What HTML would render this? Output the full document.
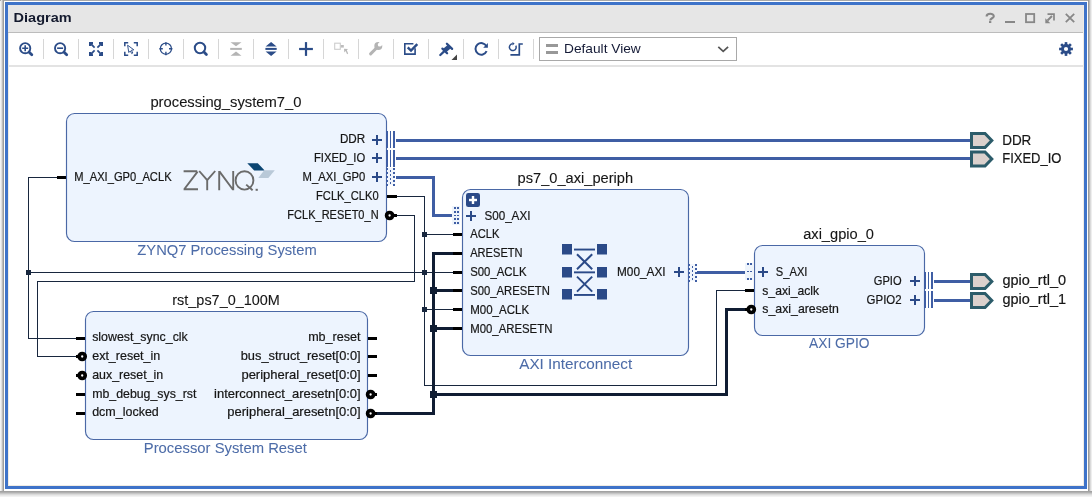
<!DOCTYPE html>
<html><head><meta charset="utf-8"><style>
html,body{margin:0;padding:0;width:1092px;height:497px;overflow:hidden;background:#f3f3f3}
#wrap{position:absolute;left:0;top:0;width:1092px;height:497px;will-change:transform}
svg{display:block;font-family:"Liberation Sans",sans-serif}
text{font-family:"Liberation Sans",sans-serif}
</style></head><body><div id="wrap">
<svg width="1092" height="497" viewBox="0 0 1092 497" shape-rendering="auto">
<rect x="0" y="0" width="1092" height="497" fill="#f3f3f3"/>
<rect x="0" y="0" width="1092" height="1" fill="#a9a9a9"/>
<rect x="1" y="0" width="1" height="497" fill="#e0e0e0"/>
<rect x="2" y="0" width="1" height="497" fill="#bdbdbd"/>
<rect x="3" y="0" width="1" height="497" fill="#9d9d9d"/>
<rect x="1088" y="0" width="1" height="497" fill="#9a9a9a"/>
<rect x="1089" y="0" width="1" height="497" fill="#b9b9b9"/>
<rect x="1090" y="0" width="1" height="497" fill="#dadada"/>
<rect x="1091" y="0" width="1" height="497" fill="#eeeeee"/>
<rect x="0" y="491" width="1092" height="1" fill="#a2a2a2"/>
<rect x="0" y="492" width="1092" height="1" fill="#b0b0b0"/>
<rect x="0" y="493" width="1092" height="1" fill="#c6c6c6"/>
<rect x="0" y="494" width="1092" height="1" fill="#dadada"/>
<rect x="0" y="495" width="1092" height="1" fill="#e8e8e8"/>
<rect x="0" y="496" width="1092" height="1" fill="#f2f2f2"/>
<rect x="4" y="1" width="1084" height="490" fill="#ffffff"/>
<rect x="5" y="2" width="1082" height="487" fill="#3e73c9"/>
<rect x="8" y="5" width="1076" height="481" fill="#efebe4"/>
<rect x="8" y="5" width="1075" height="27" fill="#e6e6e6"/>
<rect x="8" y="32" width="1075" height="1" fill="#bcbcbc"/>
<rect x="9" y="33" width="1074" height="452" fill="#ffffff"/>
<rect x="9" y="65" width="1074" height="2" fill="#e3e3e3"/>
<text x="13.6" y="21.7" font-size="12.8" font-weight="bold" fill="#141a2e" textLength="58" lengthAdjust="spacingAndGlyphs">Diagram</text>
<path d="M986.6,16.4 C986.6,13.1 993.8,12.9 993.8,16.2 C993.8,18.2 990.2,18.3 990.2,20.4" fill="none" stroke="#878787" stroke-width="2.1"/>
<rect x="989.0" y="21.1" width="2.3" height="1.9" fill="#878787"/>
<rect x="1005" y="21" width="10" height="2" fill="#878787"/>
<rect x="1026" y="14" width="8.2" height="8.2" fill="none" stroke="#878787" stroke-width="1.8"/>
<polyline points="1047.5,14.2 1054,14.2 1054,20.5" fill="none" stroke="#878787" stroke-width="1.7"/>
<line x1="1052" y1="16" x2="1047.5" y2="20.5" stroke="#878787" stroke-width="1.9"/>
<polygon points="1045.3,18.2 1045.3,23.2 1050.3,23.2" fill="#878787"/>
<path d="M1065.8,13.8 L1074.2,22.2 M1074.2,13.8 L1065.8,22.2" stroke="#878787" stroke-width="1.8"/>
<rect x="43" y="39" width="1" height="20" fill="#d6d6d6"/>
<rect x="78" y="39" width="1" height="20" fill="#d6d6d6"/>
<rect x="113" y="39" width="1" height="20" fill="#d6d6d6"/>
<rect x="148" y="39" width="1" height="20" fill="#d6d6d6"/>
<rect x="183" y="39" width="1" height="20" fill="#d6d6d6"/>
<rect x="218" y="39" width="1" height="20" fill="#d6d6d6"/>
<rect x="253" y="39" width="1" height="20" fill="#d6d6d6"/>
<rect x="288" y="39" width="1" height="20" fill="#d6d6d6"/>
<rect x="323" y="39" width="1" height="20" fill="#d6d6d6"/>
<rect x="358" y="39" width="1" height="20" fill="#d6d6d6"/>
<rect x="393" y="39" width="1" height="20" fill="#d6d6d6"/>
<rect x="428" y="39" width="1" height="20" fill="#d6d6d6"/>
<rect x="463" y="39" width="1" height="20" fill="#d6d6d6"/>
<rect x="498" y="39" width="1" height="20" fill="#d6d6d6"/>
<rect x="533" y="39" width="1" height="20" fill="#d6d6d6"/>
<circle cx="25.2" cy="48.2" r="5.1" fill="none" stroke="#2b4c88" stroke-width="1.9"/>
<line x1="29.2" y1="52.2" x2="31.799999999999997" y2="54.8" stroke="#2b4c88" stroke-width="2.8" stroke-linecap="round"/>
<path d="M22.2,48.2 H28.2 M25.2,45.2 V51.2" stroke="#2b4c88" stroke-width="1.6"/>
<circle cx="60.1" cy="48.2" r="5.1" fill="none" stroke="#2b4c88" stroke-width="1.9"/>
<line x1="64.1" y1="52.2" x2="66.7" y2="54.8" stroke="#2b4c88" stroke-width="2.8" stroke-linecap="round"/>
<path d="M57.1,48.2 H63.1" stroke="#2b4c88" stroke-width="1.6"/>
<polygon points="89.00,42.00 93.00,42.00 93.00,43.80 90.80,46.00 89.00,46.00" fill="#2b4c88"/>
<line x1="91.40" y1="44.40" x2="94.60" y2="47.60" stroke="#2b4c88" stroke-width="1.7"/>
<polygon points="103.00,42.00 99.00,42.00 99.00,43.80 101.20,46.00 103.00,46.00" fill="#2b4c88"/>
<line x1="100.60" y1="44.40" x2="97.40" y2="47.60" stroke="#2b4c88" stroke-width="1.7"/>
<polygon points="89.00,56.00 93.00,56.00 93.00,54.20 90.80,52.00 89.00,52.00" fill="#2b4c88"/>
<line x1="91.40" y1="53.60" x2="94.60" y2="50.40" stroke="#2b4c88" stroke-width="1.7"/>
<polygon points="103.00,56.00 99.00,56.00 99.00,54.20 101.20,52.00 103.00,52.00" fill="#2b4c88"/>
<line x1="100.60" y1="53.60" x2="97.40" y2="50.40" stroke="#2b4c88" stroke-width="1.7"/>
<path d="M124.8,46.2 V42.8 H128.2 M133.8,42.8 H137.2 V46.2 M137.2,51.8 V55.2 H133.8 M128.2,55.2 H124.8 V51.8" fill="none" stroke="#2b4c88" stroke-width="1.5"/>
<path d="M127.6,45.2 L133.8,49.8 L131.4,50.3 L132.8,53 L131.7,53.6 L130.3,50.9 L128.8,52.5 Z" fill="#fff" stroke="#2b4c88" stroke-width="0.95"/>
<circle cx="165.9" cy="48.7" r="5.6" fill="none" stroke="#2b4c88" stroke-width="1.3"/>
<path d="M165.9,42.2 V45.6 M165.9,51.8 V55.2 M159.4,48.7 H162.8 M169,48.7 H172.4" stroke="#2b4c88" stroke-width="1.4"/>
<circle cx="200" cy="48" r="5.2" fill="none" stroke="#2b4c88" stroke-width="2"/>
<line x1="204" y1="52" x2="206.4" y2="54.4" stroke="#2b4c88" stroke-width="2.8" stroke-linecap="round"/>
<path d="M230.5,42.2 H241.5 L236,46.2 Z M230.5,55.8 H241.5 L236,51.6 Z" fill="#b4b4b4"/>
<rect x="230.2" y="47.9" width="11.6" height="2" fill="#b4b4b4"/>
<path d="M265.6,46.4 H276.6 L271.1,42 Z M265.6,51.4 H276.6 L271.1,56 Z" fill="#2b4c88"/>
<rect x="265.4" y="47.9" width="11.3" height="2" fill="#2b4c88"/>
<rect x="299.1" y="47.9" width="13.8" height="2.2" fill="#2b4c88"/>
<rect x="304.9" y="42.1" width="2.2" height="13.8" fill="#2b4c88"/>
<rect x="334.7" y="43.2" width="5.6" height="6.1" fill="none" stroke="#cdcdcd" stroke-width="1.1"/>
<rect x="340.8" y="45" width="3" height="2.6" fill="#bdbdbd"/>
<path d="M344,48.7 L348,49.1 L346.8,50.3 L348.2,53.5 L347.1,54.2 L345.6,51 L344.3,52.4 Z" fill="#b9b9b9"/>
<line x1="377" y1="47.5" x2="370.6" y2="53.9" stroke="#b4b4b4" stroke-width="3" stroke-linecap="round"/>
<circle cx="378.3" cy="45.9" r="4" fill="#b4b4b4"/>
<circle cx="379.7" cy="44.7" r="1.9" fill="#fff"/><polygon points="378.6,43 381.6,40.5 384.2,43.4 381.4,45.8" fill="#fff"/>
<path d="M415.1,48.2 V54.1 H404.8 V43.8 H413.4" fill="none" stroke="#2b4c88" stroke-width="1.6"/>
<path d="M407.7,47.4 L411,50.6 L417.3,44.2" fill="none" stroke="#2b4c88" stroke-width="2.4"/>
<path d="M446.9,43.7 L452.1,48.9 M442.4,48.6 L447.1,53.3 M444.4,51.2 L440.3,55" fill="none" stroke="#2b4c88" stroke-width="2.3" stroke-linecap="round"/><polygon points="447.6,45 450.9,48.3 446.2,52.3 442.9,49" fill="#2b4c88"/>
<path d="M457,54.5 V60 H451.5 Z" fill="#444"/>
<path d="M486.4,46.1 A5.8,5.8 0 1 0 486.6,51.2" fill="none" stroke="#2b4c88" stroke-width="2"/>
<path d="M487.9,43 V47.7 H483.2 Z" fill="#2b4c88"/>
<path d="M515.8,45.6 A3.4,3.4 0 1 1 512.6,43.8" fill="none" stroke="#2b4c88" stroke-width="1.5"/>
<path d="M512.4,42 L514.6,43.6 L512.6,45.4 Z" fill="#2b4c88"/>
<path d="M510.4,54.9 H519.3 V44 H522.8" fill="none" stroke="#2b4c88" stroke-width="1.7"/>
<g transform="translate(1066,49)"><rect x="-1.3" y="-6.9" width="2.6" height="3" fill="#2b4c88" transform="rotate(0)"/><rect x="-1.3" y="-6.9" width="2.6" height="3" fill="#2b4c88" transform="rotate(45)"/><rect x="-1.3" y="-6.9" width="2.6" height="3" fill="#2b4c88" transform="rotate(90)"/><rect x="-1.3" y="-6.9" width="2.6" height="3" fill="#2b4c88" transform="rotate(135)"/><rect x="-1.3" y="-6.9" width="2.6" height="3" fill="#2b4c88" transform="rotate(180)"/><rect x="-1.3" y="-6.9" width="2.6" height="3" fill="#2b4c88" transform="rotate(225)"/><rect x="-1.3" y="-6.9" width="2.6" height="3" fill="#2b4c88" transform="rotate(270)"/><rect x="-1.3" y="-6.9" width="2.6" height="3" fill="#2b4c88" transform="rotate(315)"/><circle cx="0" cy="0" r="4.9" fill="#2b4c88"/><circle cx="0" cy="0" r="2.1" fill="#fff"/></g>
<rect x="539.5" y="37.5" width="197" height="23" fill="#fff" stroke="#a9a9a9" stroke-width="1"/>
<rect x="546" y="44" width="12" height="3" fill="#989898"/>
<rect x="546" y="51" width="12" height="3" fill="#989898"/>
<text x="564.00" y="53.20" text-anchor="start" font-size="12.70" fill="#141a36" textLength="76.77" lengthAdjust="spacingAndGlyphs">Default View</text>
<path d="M718.3,46.8 L723.2,51.4 L728.1,46.8" fill="none" stroke="#555" stroke-width="1.7"/>
<rect x="66.5" y="113.5" width="320" height="128" rx="8" ry="8" fill="#edf4fe" stroke="#4a68a6" stroke-width="1.15"/>
<rect x="85.5" y="311.5" width="282" height="128" rx="8" ry="8" fill="#edf4fe" stroke="#4a68a6" stroke-width="1.15"/>
<rect x="462.5" y="189.5" width="226" height="166" rx="8" ry="8" fill="#edf4fe" stroke="#4a68a6" stroke-width="1.15"/>
<rect x="754.5" y="245.5" width="170" height="90" rx="8" ry="8" fill="#edf4fe" stroke="#4a68a6" stroke-width="1.15"/>
<rect x="28" y="177" width="29" height="1" fill="#18273e"/>
<rect x="28" y="177" width="1" height="162" fill="#18273e"/>
<rect x="28" y="338" width="48" height="1" fill="#18273e"/>
<rect x="28" y="272" width="425" height="1" fill="#18273e"/>
<rect x="397" y="196" width="28" height="1" fill="#18273e"/>
<rect x="424" y="196" width="1" height="190" fill="#18273e"/>
<rect x="424" y="385" width="293" height="1" fill="#18273e"/>
<rect x="716" y="290" width="1" height="96" fill="#18273e"/>
<rect x="716" y="290" width="29" height="1" fill="#18273e"/>
<rect x="424" y="234" width="29" height="1" fill="#18273e"/>
<rect x="424" y="309" width="29" height="1" fill="#18273e"/>
<rect x="397" y="215" width="18" height="1" fill="#18273e"/>
<rect x="414" y="215" width="1" height="67" fill="#18273e"/>
<rect x="37" y="281" width="378" height="1" fill="#18273e"/>
<rect x="37" y="281" width="1" height="76" fill="#18273e"/>
<rect x="37" y="356" width="39" height="1" fill="#18273e"/>
<rect x="26" y="270" width="5" height="5" fill="#18273e"/>
<rect x="422" y="232" width="5" height="5" fill="#18273e"/>
<rect x="422" y="270" width="5" height="5" fill="#18273e"/>
<rect x="422" y="307" width="5" height="5" fill="#18273e"/>
<rect x="377" y="412" width="58" height="3" fill="#101d33"/>
<rect x="432" y="252" width="3" height="163" fill="#101d33"/>
<rect x="433" y="252" width="20" height="3" fill="#101d33"/>
<rect x="433" y="289" width="20" height="3" fill="#101d33"/>
<rect x="433" y="327" width="20" height="3" fill="#101d33"/>
<rect x="433" y="393" width="295" height="3" fill="#101d33"/>
<rect x="725" y="308" width="3" height="88" fill="#101d33"/>
<rect x="726" y="308" width="21" height="3" fill="#101d33"/>
<rect x="430" y="287" width="7" height="7" fill="#101d33"/>
<rect x="430" y="325" width="7" height="7" fill="#101d33"/>
<rect x="430" y="391" width="7" height="7" fill="#101d33"/>
<rect x="396" y="139" width="576" height="3" fill="#3f5ea4"/>
<rect x="396" y="157" width="576" height="3" fill="#3f5ea4"/>
<rect x="396" y="176" width="39" height="3" fill="#3f5ea4"/>
<rect x="432" y="176" width="3" height="41" fill="#3f5ea4"/>
<rect x="433" y="214" width="20" height="3" fill="#3f5ea4"/>
<rect x="697" y="271" width="48" height="3" fill="#3f5ea4"/>
<rect x="934" y="280" width="38" height="3" fill="#3f5ea4"/>
<rect x="934" y="299" width="38" height="3" fill="#3f5ea4"/>
<text x="150.40" y="106.90" text-anchor="start" font-size="14.47" fill="#161616" textLength="151.11" lengthAdjust="spacingAndGlyphs" stroke="#161616" stroke-width="0.1">processing_system7_0</text>
<text x="137.30" y="255.10" text-anchor="start" font-size="13.95" fill="#4d6ca8" textLength="179.41" lengthAdjust="spacingAndGlyphs" stroke="#4d6ca8" stroke-width="0.05">ZYNQ7 Processing System</text>
<rect x="57" y="176" width="9" height="3" fill="#000"/>
<text x="74.20" y="181.00" text-anchor="start" font-size="12.10" fill="#161616" textLength="97.39" lengthAdjust="spacingAndGlyphs" stroke="#161616" stroke-width="0.2">M_AXI_GP0_ACLK</text>
<text x="365.20" y="143.00" text-anchor="end" font-size="12.10" fill="#161616" textLength="25.25" lengthAdjust="spacingAndGlyphs" stroke="#161616" stroke-width="0.2">DDR</text>
<text x="365.20" y="162.00" text-anchor="end" font-size="12.10" fill="#161616" textLength="51.29" lengthAdjust="spacingAndGlyphs" stroke="#161616" stroke-width="0.2">FIXED_IO</text>
<text x="365.20" y="181.00" text-anchor="end" font-size="12.10" fill="#161616" textLength="62.61" lengthAdjust="spacingAndGlyphs" stroke="#161616" stroke-width="0.2">M_AXI_GP0</text>
<text x="378.60" y="200.00" text-anchor="end" font-size="12.10" fill="#161616" textLength="62.53" lengthAdjust="spacingAndGlyphs" stroke="#161616" stroke-width="0.2">FCLK_CLK0</text>
<text x="378.60" y="219.00" text-anchor="end" font-size="12.10" fill="#161616" textLength="91.25" lengthAdjust="spacingAndGlyphs" stroke="#161616" stroke-width="0.2">FCLK_RESET0_N</text>
<rect x="372" y="139" width="10" height="2" fill="#2b4a88"/>
<rect x="376" y="135" width="2" height="10" fill="#2b4a88"/>
<rect x="372" y="157" width="10" height="2" fill="#2b4a88"/>
<rect x="376" y="153" width="2" height="10" fill="#2b4a88"/>
<rect x="372" y="176" width="10" height="2" fill="#2b4a88"/>
<rect x="376" y="172" width="2" height="10" fill="#2b4a88"/>
<rect x="386" y="131" width="2" height="17" fill="#3f5ea4"/>
<rect x="390" y="131" width="1" height="17" fill="#3f5ea4"/>
<rect x="393" y="131" width="2" height="17" fill="#3f5ea4"/>
<rect x="386" y="150" width="2" height="17" fill="#3f5ea4"/>
<rect x="390" y="150" width="1" height="17" fill="#3f5ea4"/>
<rect x="393" y="150" width="2" height="17" fill="#3f5ea4"/>
<rect x="387" y="168" width="8" height="17" fill="#f2f6fc"/>
<rect x="386" y="168" width="1" height="17" fill="#4a68a6"/>
<rect x="386" y="168" width="2" height="2" fill="#3f5ea4"/>
<rect x="393" y="168" width="2" height="2" fill="#3f5ea4"/>
<rect x="386" y="172" width="2" height="2" fill="#3f5ea4"/>
<rect x="393" y="172" width="2" height="2" fill="#3f5ea4"/>
<rect x="386" y="176" width="2" height="2" fill="#3f5ea4"/>
<rect x="393" y="176" width="2" height="2" fill="#3f5ea4"/>
<rect x="386" y="180" width="2" height="2" fill="#3f5ea4"/>
<rect x="393" y="180" width="2" height="2" fill="#3f5ea4"/>
<rect x="386" y="184" width="2" height="2" fill="#3f5ea4"/>
<rect x="393" y="184" width="2" height="2" fill="#3f5ea4"/>
<rect x="390" y="170" width="1" height="2" fill="#3f5ea4"/>
<rect x="390" y="174" width="1" height="2" fill="#3f5ea4"/>
<rect x="390" y="178" width="1" height="2" fill="#3f5ea4"/>
<rect x="390" y="182" width="1" height="2" fill="#3f5ea4"/>
<rect x="387" y="195" width="10" height="3" fill="#000"/>
<rect x="392" y="214" width="5" height="3" fill="#000"/>
<circle cx="389.6" cy="215.5" r="3.0" fill="#fff" stroke="#000" stroke-width="3.7"/>
<path d="M183.6,171.3 H197.2 M197.6,171.6 L184.4,189 M183.6,189.3 H198" fill="none" stroke="#6b6b6b" stroke-width="1.9"/>
<path d="M199.2,171 L207.2,180.2 M215.2,171 L207.2,180.2 M207.2,179.6 V190.3" fill="none" stroke="#6b6b6b" stroke-width="1.9"/>
<path d="M219.2,190.3 V170.9 M233.2,190.3 V170.9 M219.4,171.4 L233,189.8" fill="none" stroke="#6b6b6b" stroke-width="1.9"/>
<ellipse cx="244.5" cy="180.4" rx="8.9" ry="9.2" fill="none" stroke="#6b6b6b" stroke-width="1.9"/>
<path d="M246.2,184.6 L252.6,190.2" stroke="#6b6b6b" stroke-width="1.9"/>
<rect x="255.6" y="188.8" width="2.2" height="2" fill="#6b6b6b"/>
<polygon points="247.3,163.2 257.8,163.2 264.7,170.5 254.2,170.5" fill="#0b4572"/>
<polygon points="264.2,170.3 274.8,170.3 268.4,177.9 258.3,177.9" fill="#b9c9d8"/>
<text x="172.30" y="305.20" text-anchor="start" font-size="14.47" fill="#161616" textLength="107.52" lengthAdjust="spacingAndGlyphs" stroke="#161616" stroke-width="0.1">rst_ps7_0_100M</text>
<text x="306.90" y="452.90" text-anchor="end" font-size="13.95" fill="#4d6ca8" textLength="163.10" lengthAdjust="spacingAndGlyphs" stroke="#4d6ca8" stroke-width="0.05">Processor System Reset</text>
<text x="92.20" y="341.00" text-anchor="start" font-size="12.10" fill="#161616" textLength="95.60" lengthAdjust="spacingAndGlyphs" stroke="#161616" stroke-width="0.2">slowest_sync_clk</text>
<rect x="76" y="337" width="9" height="3" fill="#000"/>
<text x="92.20" y="360.00" text-anchor="start" font-size="12.10" fill="#161616" textLength="68.09" lengthAdjust="spacingAndGlyphs" stroke="#161616" stroke-width="0.2">ext_reset_in</text>
<rect x="76" y="355" width="5" height="3" fill="#000"/>
<circle cx="82.2" cy="356.5" r="3.0" fill="#fff" stroke="#000" stroke-width="3.7"/>
<text x="92.20" y="378.80" text-anchor="start" font-size="12.10" fill="#161616" textLength="71.00" lengthAdjust="spacingAndGlyphs" stroke="#161616" stroke-width="0.2">aux_reset_in</text>
<rect x="76" y="374" width="5" height="3" fill="#000"/>
<circle cx="82.2" cy="375.5" r="3.0" fill="#fff" stroke="#000" stroke-width="3.7"/>
<text x="92.20" y="397.60" text-anchor="start" font-size="12.10" fill="#161616" textLength="104.19" lengthAdjust="spacingAndGlyphs" stroke="#161616" stroke-width="0.2">mb_debug_sys_rst</text>
<rect x="76" y="393" width="9" height="3" fill="#000"/>
<text x="92.20" y="416.40" text-anchor="start" font-size="12.10" fill="#161616" textLength="66.58" lengthAdjust="spacingAndGlyphs" stroke="#161616" stroke-width="0.2">dcm_locked</text>
<rect x="76" y="412" width="9" height="3" fill="#000"/>
<text x="360.60" y="341.00" text-anchor="end" font-size="12.10" fill="#161616" textLength="52.45" lengthAdjust="spacingAndGlyphs" stroke="#161616" stroke-width="0.2">mb_reset</text>
<rect x="368" y="337" width="9" height="3" fill="#000"/>
<text x="360.60" y="360.00" text-anchor="end" font-size="12.10" fill="#161616" textLength="119.92" lengthAdjust="spacingAndGlyphs" stroke="#161616" stroke-width="0.2">bus_struct_reset[0:0]</text>
<rect x="368" y="355" width="9" height="3" fill="#000"/>
<text x="360.60" y="378.80" text-anchor="end" font-size="12.10" fill="#161616" textLength="119.18" lengthAdjust="spacingAndGlyphs" stroke="#161616" stroke-width="0.2">peripheral_reset[0:0]</text>
<rect x="368" y="374" width="9" height="3" fill="#000"/>
<text x="360.60" y="397.60" text-anchor="end" font-size="12.10" fill="#161616" textLength="146.49" lengthAdjust="spacingAndGlyphs" stroke="#161616" stroke-width="0.2">interconnect_aresetn[0:0]</text>
<rect x="373" y="393" width="4" height="3" fill="#000"/>
<circle cx="370.6" cy="394.5" r="3.0" fill="#fff" stroke="#000" stroke-width="3.7"/>
<text x="360.60" y="416.40" text-anchor="end" font-size="12.10" fill="#161616" textLength="133.27" lengthAdjust="spacingAndGlyphs" stroke="#161616" stroke-width="0.2">peripheral_aresetn[0:0]</text>
<rect x="373" y="412" width="4" height="3" fill="#000"/>
<circle cx="370.6" cy="413.5" r="3.0" fill="#fff" stroke="#000" stroke-width="3.7"/>
<text x="517.60" y="183.30" text-anchor="start" font-size="14.47" fill="#161616" textLength="115.48" lengthAdjust="spacingAndGlyphs" stroke="#161616" stroke-width="0.1">ps7_0_axi_periph</text>
<text x="519.20" y="368.60" text-anchor="start" font-size="13.95" fill="#4d6ca8" textLength="112.96" lengthAdjust="spacingAndGlyphs" stroke="#4d6ca8" stroke-width="0.05">AXI Interconnect</text>
<rect x="466" y="193" width="14" height="14" rx="2.3" fill="#2b4a88"/>
<rect x="469" y="198.8" width="8" height="2.4" fill="#fff"/>
<rect x="471.8" y="196" width="2.4" height="8" fill="#fff"/>
<rect x="466" y="215" width="10" height="2" fill="#2b4a88"/>
<rect x="470" y="211" width="2" height="10" fill="#2b4a88"/>
<rect x="452" y="206" width="8" height="19" fill="#eef4fb"/>
<rect x="454" y="207" width="2" height="2" fill="#3f5ea4"/>
<rect x="457" y="207" width="2" height="2" fill="#3f5ea4"/>
<rect x="454" y="211" width="2" height="2" fill="#3f5ea4"/>
<rect x="457" y="211" width="2" height="2" fill="#3f5ea4"/>
<rect x="454" y="218" width="2" height="2" fill="#3f5ea4"/>
<rect x="457" y="218" width="2" height="2" fill="#3f5ea4"/>
<rect x="454" y="222" width="2" height="2" fill="#3f5ea4"/>
<rect x="457" y="222" width="2" height="2" fill="#3f5ea4"/>
<rect x="454" y="215" width="2" height="1" fill="#3f5ea4"/>
<rect x="457" y="215" width="2" height="1" fill="#3f5ea4"/>
<text x="484.40" y="220.20" text-anchor="start" font-size="12.10" fill="#161616" textLength="46.01" lengthAdjust="spacingAndGlyphs" stroke="#161616" stroke-width="0.2">S00_AXI</text>
<text x="470.20" y="238.30" text-anchor="start" font-size="12.10" fill="#161616" textLength="29.13" lengthAdjust="spacingAndGlyphs" stroke="#161616" stroke-width="0.2">ACLK</text>
<rect x="453" y="233" width="9" height="3" fill="#000"/>
<text x="470.20" y="257.20" text-anchor="start" font-size="12.10" fill="#161616" textLength="52.39" lengthAdjust="spacingAndGlyphs" stroke="#161616" stroke-width="0.2">ARESETN</text>
<rect x="453" y="252" width="9" height="3" fill="#000"/>
<text x="470.20" y="276.10" text-anchor="start" font-size="12.10" fill="#161616" textLength="56.33" lengthAdjust="spacingAndGlyphs" stroke="#161616" stroke-width="0.2">S00_ACLK</text>
<rect x="453" y="271" width="9" height="3" fill="#000"/>
<text x="470.20" y="294.90" text-anchor="start" font-size="12.10" fill="#161616" textLength="79.59" lengthAdjust="spacingAndGlyphs" stroke="#161616" stroke-width="0.2">S00_ARESETN</text>
<rect x="453" y="289" width="9" height="3" fill="#000"/>
<text x="470.20" y="313.80" text-anchor="start" font-size="12.10" fill="#161616" textLength="58.91" lengthAdjust="spacingAndGlyphs" stroke="#161616" stroke-width="0.2">M00_ACLK</text>
<rect x="453" y="308" width="9" height="3" fill="#000"/>
<text x="470.20" y="332.60" text-anchor="start" font-size="12.10" fill="#161616" textLength="82.17" lengthAdjust="spacingAndGlyphs" stroke="#161616" stroke-width="0.2">M00_ARESETN</text>
<rect x="453" y="327" width="9" height="3" fill="#000"/>
<rect x="562" y="244" width="10" height="10.5" fill="#2b4a88"/>
<rect x="562" y="267" width="10" height="10.5" fill="#2b4a88"/>
<rect x="562" y="289" width="10" height="10.5" fill="#2b4a88"/>
<rect x="597" y="244" width="10" height="10.5" fill="#2b4a88"/>
<rect x="597" y="267" width="10" height="10.5" fill="#2b4a88"/>
<rect x="597" y="289" width="10" height="10.5" fill="#2b4a88"/>
<rect x="574" y="248.6" width="21" height="1.9" fill="#2b4a88"/>
<rect x="574" y="271.4" width="21" height="1.9" fill="#2b4a88"/>
<rect x="574" y="294" width="21" height="1.9" fill="#2b4a88"/>
<path d="M577,254.2 L592.2,269.2 M592.2,254.2 L577,269.2 M577,276.6 L592.2,291.6 M592.2,276.6 L577,291.6" stroke="#2b4a88" stroke-width="2"/>
<text x="665.60" y="276.40" text-anchor="end" font-size="12.10" fill="#161616" textLength="48.58" lengthAdjust="spacingAndGlyphs" stroke="#161616" stroke-width="0.2">M00_AXI</text>
<rect x="674" y="271" width="10" height="2" fill="#2b4a88"/>
<rect x="678" y="267" width="2" height="10" fill="#2b4a88"/>
<rect x="689" y="264" width="8" height="17" fill="#f2f6fc"/>
<rect x="688" y="264" width="1" height="17" fill="#4a68a6"/>
<rect x="688" y="264" width="2" height="2" fill="#3f5ea4"/>
<rect x="695" y="264" width="2" height="2" fill="#3f5ea4"/>
<rect x="688" y="268" width="2" height="2" fill="#3f5ea4"/>
<rect x="695" y="268" width="2" height="2" fill="#3f5ea4"/>
<rect x="688" y="272" width="2" height="2" fill="#3f5ea4"/>
<rect x="695" y="272" width="2" height="2" fill="#3f5ea4"/>
<rect x="688" y="276" width="2" height="2" fill="#3f5ea4"/>
<rect x="695" y="276" width="2" height="2" fill="#3f5ea4"/>
<rect x="688" y="280" width="2" height="2" fill="#3f5ea4"/>
<rect x="695" y="280" width="2" height="2" fill="#3f5ea4"/>
<rect x="692" y="266" width="1" height="2" fill="#3f5ea4"/>
<rect x="692" y="270" width="1" height="2" fill="#3f5ea4"/>
<rect x="692" y="274" width="1" height="2" fill="#3f5ea4"/>
<rect x="692" y="278" width="1" height="2" fill="#3f5ea4"/>
<text x="803.20" y="238.90" text-anchor="start" font-size="14.47" fill="#161616" textLength="70.72" lengthAdjust="spacingAndGlyphs" stroke="#161616" stroke-width="0.1">axi_gpio_0</text>
<text x="809.00" y="348.40" text-anchor="start" font-size="13.95" fill="#4d6ca8" textLength="60.50" lengthAdjust="spacingAndGlyphs" stroke="#4d6ca8" stroke-width="0.05">AXI GPIO</text>
<rect x="745" y="263" width="8" height="17" fill="#eef4fb"/>
<rect x="747" y="263" width="2" height="2" fill="#3f5ea4"/>
<rect x="750" y="263" width="2" height="2" fill="#3f5ea4"/>
<rect x="747" y="278" width="2" height="2" fill="#3f5ea4"/>
<rect x="750" y="278" width="2" height="2" fill="#3f5ea4"/>
<rect x="747" y="271" width="2" height="1" fill="#3f5ea4"/>
<rect x="750" y="271" width="2" height="1" fill="#3f5ea4"/>
<rect x="758" y="271" width="10" height="2" fill="#2b4a88"/>
<rect x="762" y="267" width="2" height="10" fill="#2b4a88"/>
<text x="775.80" y="275.80" text-anchor="start" font-size="12.10" fill="#161616" textLength="31.63" lengthAdjust="spacingAndGlyphs" stroke="#161616" stroke-width="0.2">S_AXI</text>
<text x="762.30" y="294.60" text-anchor="start" font-size="12.10" fill="#161616" textLength="56.76" lengthAdjust="spacingAndGlyphs" stroke="#161616" stroke-width="0.2">s_axi_aclk</text>
<text x="762.30" y="313.40" text-anchor="start" font-size="12.10" fill="#161616" textLength="76.65" lengthAdjust="spacingAndGlyphs" stroke="#161616" stroke-width="0.2">s_axi_aresetn</text>
<rect x="745" y="289" width="9" height="3" fill="#000"/>
<rect x="745" y="308" width="4" height="3" fill="#000"/>
<circle cx="751.3" cy="309.5" r="3.0" fill="#fff" stroke="#000" stroke-width="3.7"/>
<text x="901.60" y="285.30" text-anchor="end" font-size="12.10" fill="#161616" textLength="27.80" lengthAdjust="spacingAndGlyphs" stroke="#161616" stroke-width="0.2">GPIO</text>
<text x="901.60" y="304.00" text-anchor="end" font-size="12.10" fill="#161616" textLength="34.99" lengthAdjust="spacingAndGlyphs" stroke="#161616" stroke-width="0.2">GPIO2</text>
<rect x="910" y="280" width="10" height="2" fill="#2b4a88"/>
<rect x="914" y="276" width="2" height="10" fill="#2b4a88"/>
<rect x="910" y="299" width="10" height="2" fill="#2b4a88"/>
<rect x="914" y="295" width="2" height="10" fill="#2b4a88"/>
<rect x="924" y="272" width="2" height="17" fill="#3f5ea4"/>
<rect x="928" y="272" width="1" height="17" fill="#3f5ea4"/>
<rect x="931" y="272" width="2" height="17" fill="#3f5ea4"/>
<rect x="924" y="291" width="2" height="17" fill="#3f5ea4"/>
<rect x="928" y="291" width="1" height="17" fill="#3f5ea4"/>
<rect x="931" y="291" width="2" height="17" fill="#3f5ea4"/>
<polygon points="971.5,133.5 985.0,133.5 991.8,140.5 985.0,147.5 971.5,147.5" fill="#dbd1cd" stroke="#2c5c6a" stroke-width="3" stroke-linejoin="miter"/>
<text x="1002.20" y="144.90" text-anchor="start" font-size="14.09" fill="#161616" textLength="29.16" lengthAdjust="spacingAndGlyphs" stroke="#161616" stroke-width="0.2">DDR</text>
<polygon points="971.5,152.0 985.0,152.0 991.8,159.0 985.0,166.0 971.5,166.0" fill="#dbd1cd" stroke="#2c5c6a" stroke-width="3" stroke-linejoin="miter"/>
<text x="1002.20" y="163.20" text-anchor="start" font-size="14.09" fill="#161616" textLength="59.24" lengthAdjust="spacingAndGlyphs" stroke="#161616" stroke-width="0.2">FIXED_IO</text>
<polygon points="971.5,274.5 985.0,274.5 991.8,281.5 985.0,288.5 971.5,288.5" fill="#dbd1cd" stroke="#2c5c6a" stroke-width="3" stroke-linejoin="miter"/>
<text x="1002.40" y="285.40" text-anchor="start" font-size="14.09" fill="#161616" textLength="63.64" lengthAdjust="spacingAndGlyphs" stroke="#161616" stroke-width="0.2">gpio_rtl_0</text>
<polygon points="971.5,293.5 985.0,293.5 991.8,300.5 985.0,307.5 971.5,307.5" fill="#dbd1cd" stroke="#2c5c6a" stroke-width="3" stroke-linejoin="miter"/>
<text x="1002.40" y="304.40" text-anchor="start" font-size="14.09" fill="#161616" textLength="63.64" lengthAdjust="spacingAndGlyphs" stroke="#161616" stroke-width="0.2">gpio_rtl_1</text>
</svg></div>
</body></html>
